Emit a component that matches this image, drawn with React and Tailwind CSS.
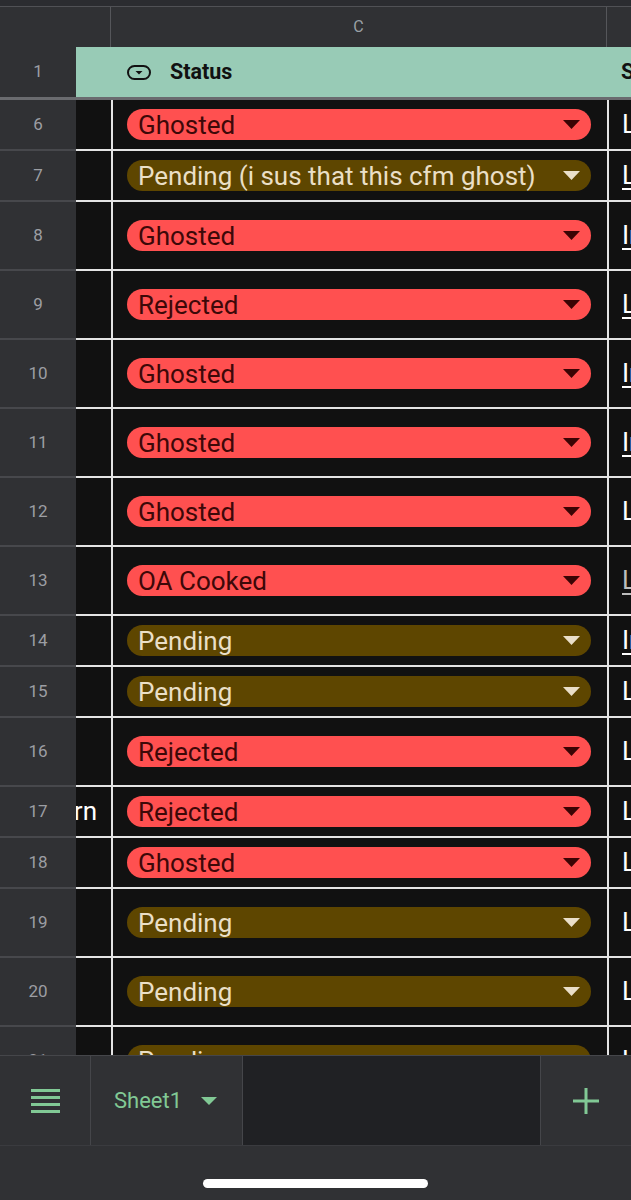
import React from 'react'

const FONT = { fontFamily: 'Roboto, "Noto Sans", Arial, sans-serif' }

const ROWS = [
  { n: 6, tall: false, status: 'Ghosted', src: 'LinkedIn', link: false },
  { n: 7, tall: false, status: 'Pending (i sus that this cfm ghost)', src: 'LinkedIn', link: true },
  { n: 8, tall: true, status: 'Ghosted', src: 'Indeed', link: true },
  { n: 9, tall: true, status: 'Rejected', src: 'LinkedIn', link: true },
  { n: 10, tall: true, status: 'Ghosted', src: 'Indeed', link: true },
  { n: 11, tall: true, status: 'Ghosted', src: 'Indeed', link: true },
  { n: 12, tall: true, status: 'Ghosted', src: 'LinkedIn', link: false },
  { n: 13, tall: true, status: 'OA Cooked', src: 'LinkedIn', link: true, dim: true },
  { n: 14, tall: false, status: 'Pending', src: 'Indeed', link: true },
  { n: 15, tall: false, status: 'Pending', src: 'LinkedIn', link: false },
  { n: 16, tall: true, status: 'Rejected', src: 'LinkedIn', link: false },
  { n: 17, tall: false, status: 'Rejected', src: 'LinkedIn', link: false, role: 'Intern' },
  { n: 18, tall: false, status: 'Ghosted', src: 'LinkedIn', link: false },
  { n: 19, tall: true, status: 'Pending', src: 'LinkedIn', link: false },
  { n: 20, tall: true, status: 'Pending', src: 'LinkedIn', link: false },
  { n: 21, tall: true, status: 'Pending', src: 'LinkedIn', link: false },
]

function Caret({ color }) {
  return (
    <svg width="17" height="9" viewBox="0 0 17 9" className="shrink-0">
      <polygon points="0,0 17,0 8.5,9" fill={color} />
    </svg>
  )
}

function StatusChip({ status }) {
  const pending = status.startsWith('Pending')
  return (
    <div
      className={
        'flex h-[31px] w-[464px] items-center justify-between rounded-full pl-[11px] pr-[11px] ' +
        (pending ? 'bg-[#5e4600] text-[#eadfc6]' : 'bg-[#ff5050] text-[#3d0808]')
      }
    >
      <span className="text-[26px] leading-[30px] whitespace-nowrap">{status}</span>
      <Caret color={pending ? '#eadfc9' : '#3a0404'} />
    </div>
  )
}

function Row({ row }) {
  const h = row.tall ? 'h-[69px]' : 'h-[51px]'
  return (
    <div className={'flex shrink-0 ' + h}>
      <div className="relative z-10 flex w-[76px] shrink-0 items-center justify-center border-b-2 border-[#47484c] bg-[#303134] text-[17px] text-[#9c9ea3]">
        {row.n}
      </div>
      <div className="flex w-[37px] shrink-0 items-center justify-end overflow-hidden border-b-2 border-r-2 border-[#e4e4e4] bg-[#111111] pr-[14px] text-[26px] text-white">
        {row.role && <span className="whitespace-nowrap">{row.role}</span>}
      </div>
      <div className="flex w-[496px] shrink-0 items-center border-b-2 border-r-2 border-[#e4e4e4] bg-[#111111] pl-[14px]">
        <StatusChip status={row.status} />
      </div>
      <div className="flex min-w-0 flex-1 items-center overflow-hidden border-b-2 border-[#e4e4e4] bg-[#111111] pl-[13px] text-[26px]">
        <span className={'whitespace-nowrap ' + (row.link ? 'underline underline-offset-4 ' : '') + (row.dim ? 'text-[#bdbdbd]' : 'text-white')}>
          {row.src}
        </span>
      </div>
    </div>
  )
}

export default function App() {
  return (
    <div className="flex h-[1200px] w-[631px] flex-col overflow-hidden bg-[#111111]" style={FONT}>
      {/* column header */}
      <div className="h-[6px] shrink-0 bg-[#2b2c30]" />
      <div className="flex h-[41px] shrink-0 border-t border-[#505155] bg-[#303134]">
        <div className="w-[111px] shrink-0 border-r border-[#55565a]" />
        <div className="flex w-[496px] shrink-0 items-center justify-center border-r border-[#55565a] text-[16px] text-[#9aa0a6]">
          C
        </div>
        <div className="flex-1" />
      </div>

      {/* header row 1 */}
      <div className="flex h-[50px] shrink-0">
        <div className="flex w-[76px] shrink-0 items-center justify-center bg-[#303134] text-[17px] text-[#9c9ea3]">1</div>
        <div className="flex min-w-0 flex-1 items-center overflow-hidden bg-[#98cbb6]">
          <div className="w-[51px] shrink-0" />
          <svg width="24" height="15" viewBox="0 0 24 15" className="shrink-0">
            <rect x="1" y="1" width="22" height="13" rx="6.5" fill="none" stroke="#111" strokeWidth="2" />
            <polygon points="8.5,6 15.5,6 12,9.5" fill="#111" />
          </svg>
          <span className="ml-[19px] w-[438px] shrink-0 text-[21.5px] font-bold text-[#111]">Status</span>
          <span className="ml-[13px] shrink-0 text-[21.5px] font-bold text-[#111]">Source</span>
        </div>
      </div>
      <div className="h-[3px] shrink-0 bg-[#6a6b6f]" />

      {/* grid */}
      <div className="flex min-h-0 flex-1 flex-col overflow-hidden">
        {ROWS.map((r) => (
          <Row key={r.n} row={r} />
        ))}
      </div>

      {/* sheet tabs */}
      <div className="flex h-[90px] shrink-0 border-t border-[#45464a] bg-[#303134]">
        <div className="flex w-[91px] shrink-0 items-center justify-center border-r border-[#45464a]">
          <div className="flex w-[29px] flex-col gap-[4px]">
            <div className="h-[3px] bg-[#81c995]" />
            <div className="h-[3px] bg-[#81c995]" />
            <div className="h-[3px] bg-[#81c995]" />
            <div className="h-[3px] bg-[#81c995]" />
          </div>
        </div>
        <div className="flex w-[152px] shrink-0 items-center border-r border-[#45464a] pl-[23px]">
          <span className="text-[22px] text-[#81c995]">Sheet1</span>
          <svg width="16" height="8" viewBox="0 0 16 8" className="ml-[19px]">
            <polygon points="0,0 16,0 8,8" fill="#81c995" />
          </svg>
        </div>
        <div className="w-[298px] shrink-0 border-r border-[#45464a] bg-[#202124]" />
        <div className="flex flex-1 items-center justify-center">
          <svg width="28" height="28" viewBox="0 0 28 28">
            <path d="M14 1v26M1 14h26" stroke="#81c995" strokeWidth="3" />
          </svg>
        </div>
      </div>
      <div className="flex h-[55px] shrink-0 items-start justify-center border-t border-[#3a3b3f] bg-[#303134] pt-[33px]">
        <div className="h-[9px] w-[225px] rounded-full bg-white" />
      </div>
    </div>
  )
}
